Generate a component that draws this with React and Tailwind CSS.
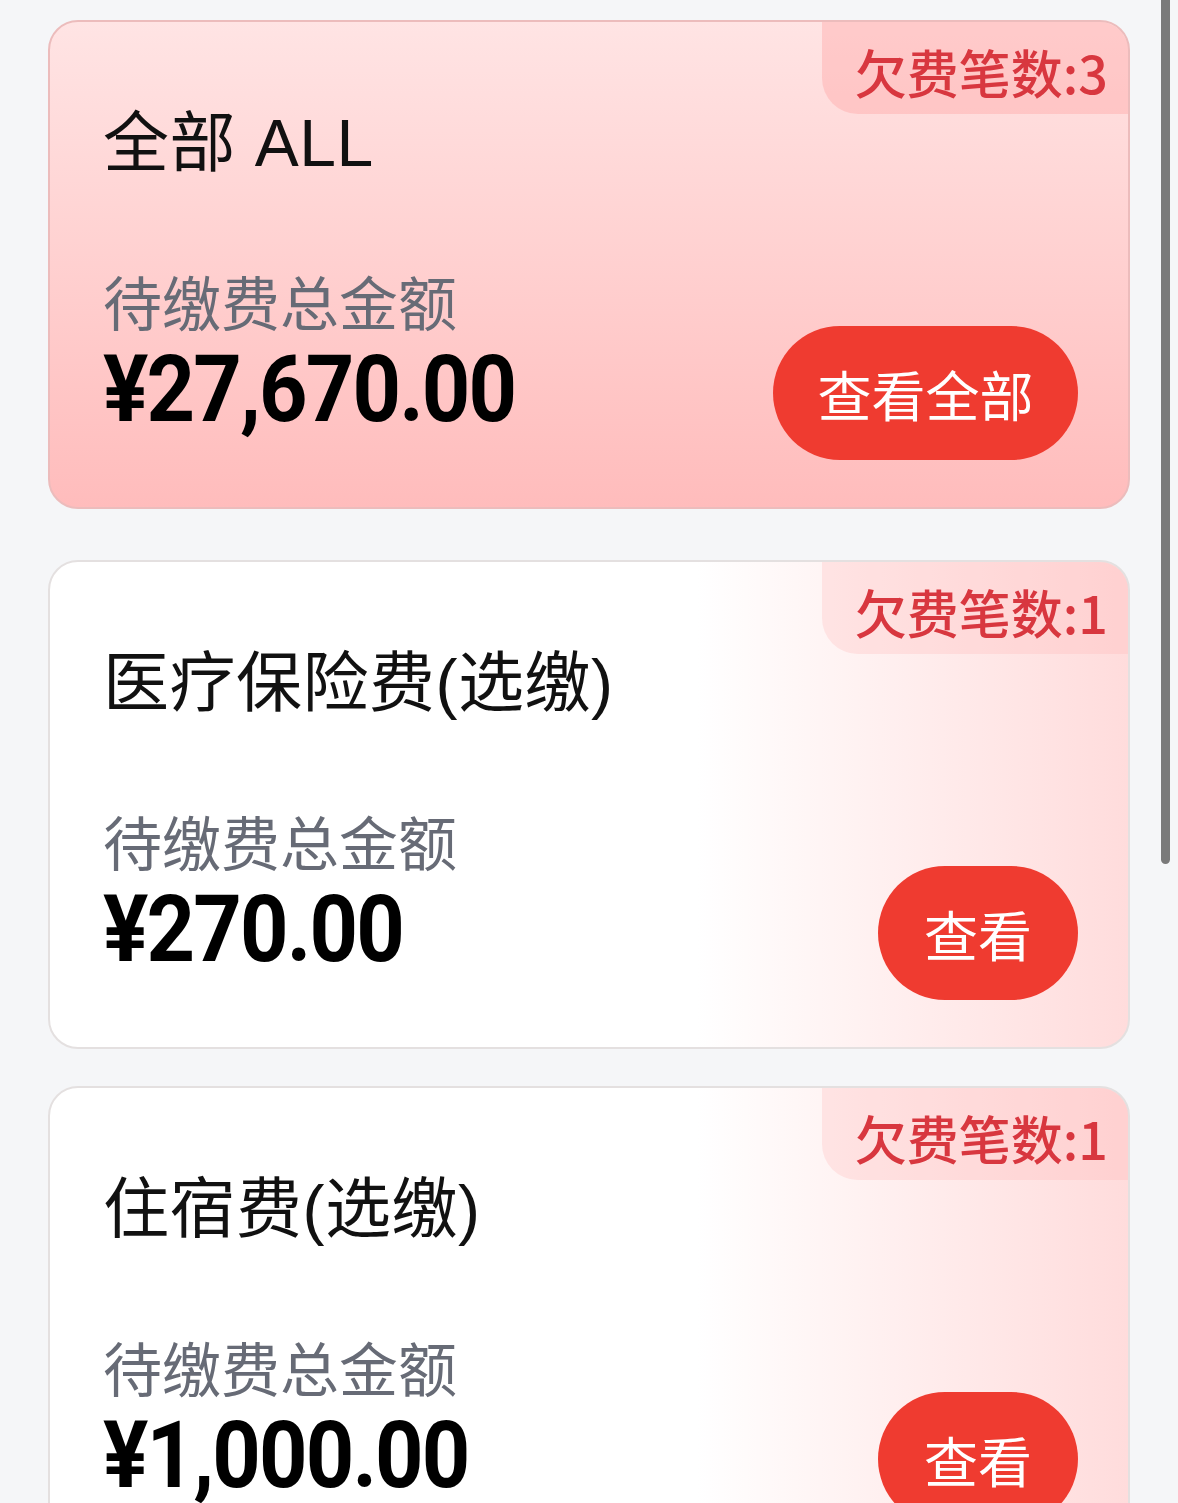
import React from "react";

const cjk = { fontFamily: '"Noto Sans CJK SC", "Noto Sans", sans-serif' };
const head = { fontFamily: '"Liberation Sans", "Noto Sans CJK SC", sans-serif' };
const num = { fontFamily: 'Roboto, "Liberation Sans", sans-serif' };

function FeeCard({ title, amount, count, button, highlight }) {
  return (
    <div
      className={
        "relative overflow-hidden rounded-[30px] border-2 pl-[53px] pr-[50px] pt-[83px] pb-[47px] " +
        (highlight
          ? "border-[#ecbcbc] bg-linear-to-b from-[#ffe4e4] to-[#ffbcbc]"
          : "border-[#e4e0e0] bg-linear-to-r from-white from-60% to-[#ffdcdc]")
      }
    >
      {/* count badge */}
      <div
        className={
          "absolute top-0 right-0 flex h-[92px] items-center rounded-bl-[36px] pl-[33px] pr-[20px] pt-[8px] " +
          (highlight ? "bg-[#ff9a9a]/35" : "bg-[#ffb0b0]/25")
        }
      >
        <span className="text-[52px] leading-none font-medium text-[#d8373f]" style={cjk}>
          欠费笔数:{count}
        </span>
      </div>

      <h2 className="text-[66px] leading-[77px] tracking-[0.5px] text-[#111]" style={head}>
        {title}
      </h2>

      <div className="mt-[84px] flex items-end justify-between">
        <div className="mb-[25px] flex flex-col gap-[9px]">
          <p className="text-[59px] leading-[70px] text-[#676b76]" style={cjk}>
            待缴费总金额
          </p>
          <p
            className="origin-left scale-x-[0.92] text-[92px] leading-[90px] font-bold tracking-[-2px] text-black"
            style={num}
          >
            ¥{amount}
          </p>
        </div>
        <button
          className={
            "flex h-[134px] items-center justify-center rounded-full bg-[#ef3b30] text-[54px] text-white " +
            (button.length > 2 ? "w-[305px]" : "w-[200px]")
          }
          style={cjk}
        >
          {button}
        </button>
      </div>
    </div>
  );
}

export default function App() {
  const fees = [
    { title: "医疗保险费(选缴)", amount: "270.00", count: 1, button: "查看" },
    { title: "住宿费(选缴)", amount: "1,000.00", count: 1, button: "查看" },
  ];

  return (
    <div className="relative h-[1503px] overflow-hidden bg-[#f5f6f8] px-[48px] pt-[20px]">
      <div className="flex flex-col gap-[37px]">
        <div className="mb-[14px]">
          <FeeCard title="全部 ALL" amount="27,670.00" count={3} button="查看全部" highlight />
        </div>
        {fees.map((f, i) => (
          <FeeCard key={i} {...f} />
        ))}
      </div>

      {/* scrollbar thumb */}
      <div className="absolute top-0 right-[8px] h-[864px] w-[9px] rounded-b-full bg-[#7a7a7a]"></div>
    </div>
  );
}
